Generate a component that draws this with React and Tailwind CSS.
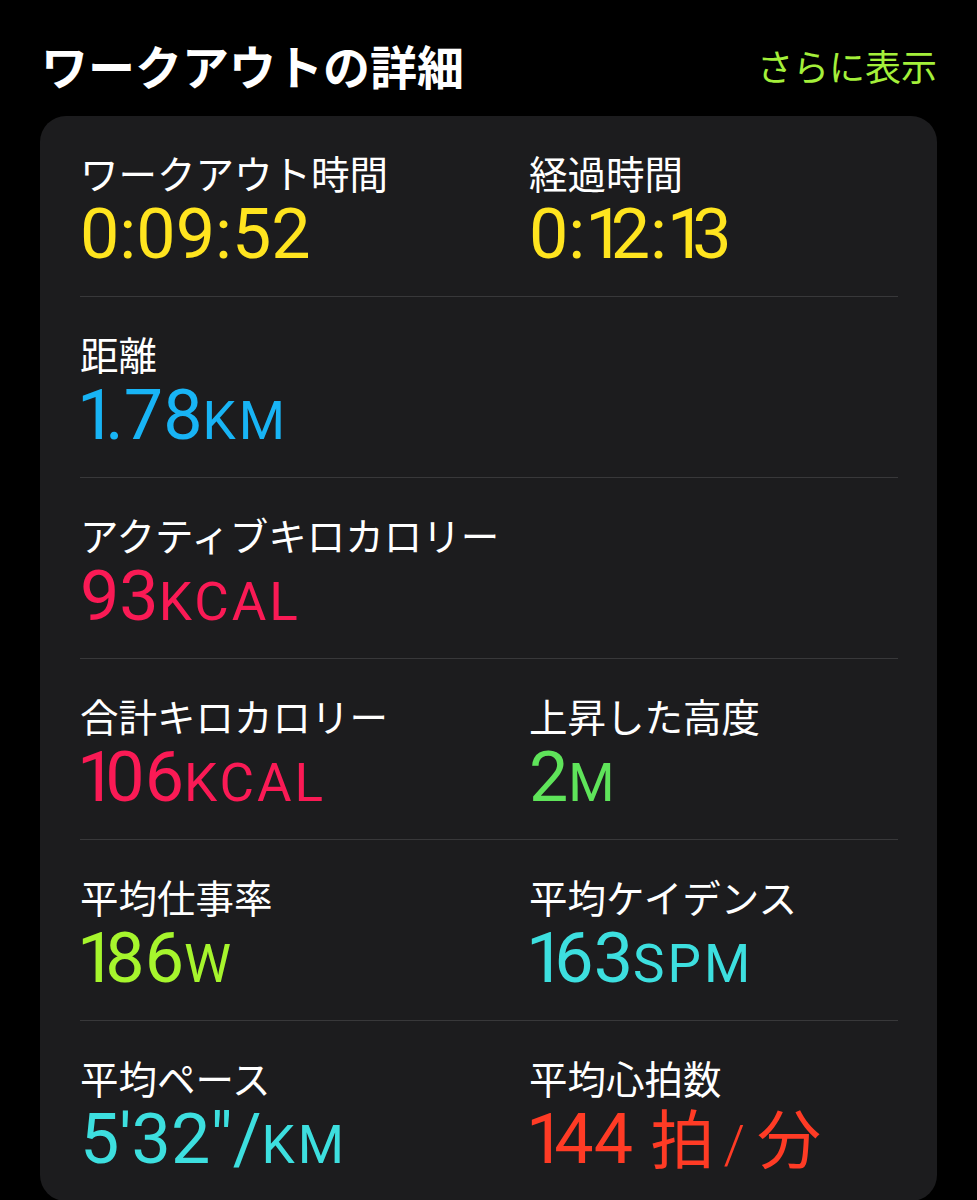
import React from "react";

const rows = [
  [
    { label: "ワークアウト時間", value: "0:09:52", color: "text-[#ffe41f]" },
    { label: "経過時間", value: "0:12:13", color: "text-[#ffe41f]" },
  ],
  [{ label: "距離", value: "1.78", unit: "KM", color: "text-[#18b4f5]" }],
  [{ label: "アクティブキロカロリー", value: "93", unit: "KCAL", color: "text-[#fa1a55]" }],
  [
    { label: "合計キロカロリー", value: "106", unit: "KCAL", color: "text-[#fa1a55]" },
    { label: "上昇した高度", value: "2", unit: "M", color: "text-[#5fe45a]" },
  ],
  [
    { label: "平均仕事率", value: "186", unit: "W", color: "text-[#a6f52d]" },
    { label: "平均ケイデンス", value: "163", unit: "SPM", color: "text-[#3ddfdf]" },
  ],
  [
    { label: "平均ペース", value: "5'32\"/", unit: "KM", color: "text-[#3ddfdf]" },
    { label: "平均心拍数", heart: true, color: "text-[#ff3b25]" },
  ],
];

function Digits({ text }) {
  return (
    <>
      {text.split("").map((ch, i) =>
        ch === "1" ? (
          <span key={i} className={i === 0 ? "ml-[-3px] tracking-[-11px]" : "tracking-[-14px]"}>
            1
          </span>
        ) : (
          <React.Fragment key={i}>{ch}</React.Fragment>
        )
      )}
    </>
  );
}

function Value({ item }) {
  if (item.heart) {
    return (
      <div className={`h-[80px] leading-[80px] text-[70px] font-['Roboto',sans-serif] whitespace-nowrap ${item.color}`}>
        <Digits text="144" />{" "}
        <span className="text-[64px] leading-none font-['Noto_Sans_CJK_JP',sans-serif]">拍</span>
        <span className="text-[54px] leading-none ml-[9px] mr-[12px] font-light">/</span>
        <span className="text-[64px] leading-none font-['Noto_Sans_CJK_JP',sans-serif]">分</span>
      </div>
    );
  }
  return (
    <div className={`h-[80px] leading-[80px] text-[70px] font-['Roboto',sans-serif] whitespace-nowrap ${item.color}`}>
      <Digits text={item.value} />
      {item.unit && <span className="text-[53px] leading-none tracking-[3px]">{item.unit}</span>}
    </div>
  );
}

function Cell({ item }) {
  return (
    <div>
      <div className="h-[44px] leading-[44px] text-[38.5px] text-white whitespace-nowrap">{item.label}</div>
      <Value item={item} />
    </div>
  );
}

export default function App() {
  return (
    <div className="w-[977px] h-[1200px] bg-black overflow-hidden font-['Noto_Sans_CJK_JP',sans-serif]">
      <div className="flex items-center justify-between pl-[41px] pr-[40px] pt-[37px] h-[93px]">
        <div className="text-[47px] leading-[56px] font-bold text-white">ワークアウトの詳細</div>
        <div className="text-[36px] leading-[56px] text-[#a4f03a]">さらに表示</div>
      </div>
      <div className="mt-[23px] ml-[40px] w-[897px] rounded-[26px] bg-[#1c1c1e] pl-[40px] pr-[39px]">
        {rows.map((row, i) => (
          <div
            key={i}
            className={`grid grid-cols-[449px_1fr] pt-[34px] pb-[22px] ${
              i < rows.length - 1 ? "border-b border-[#38383a]" : ""
            }`}
          >
            {row.map((item, j) => (
              <Cell key={j} item={item} />
            ))}
          </div>
        ))}
      </div>
    </div>
  );
}
